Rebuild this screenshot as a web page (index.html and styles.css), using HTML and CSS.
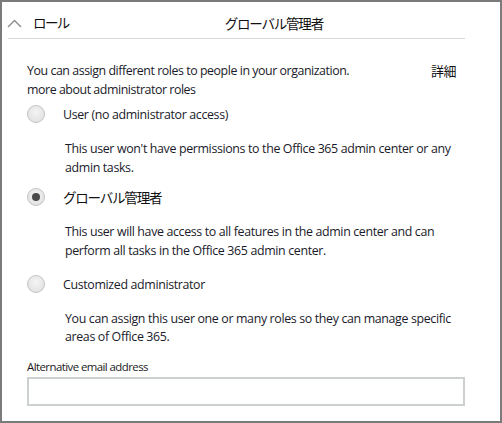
FILE: index.html
```html
<!DOCTYPE html>
<html lang="ja">
<head>
<meta charset="utf-8">
<link rel="stylesheet" href="styles.css">
</head>
<body>
<div class="frame">
  <div class="header">
    <svg class="chevron" width="15" height="9" viewBox="0 0 15 9"><path d="M1 8 L7.5 1.5 L14 8" fill="none" stroke="#8a8a8a" stroke-width="1.4"/></svg>
    <span class="header-label">ロール</span>
    <span class="header-value">グローバル管理者</span>
  </div>
  <div class="separator"></div>
  <div class="content">
    <div class="intro">
      <p class="intro-text">You can assign different roles to people in your organization.<br>more about administrator roles</p>
      <span class="more">詳細</span>
    </div>
    <div class="option first">
      <div class="option-row"><span class="radio"></span><span class="option-label">User (no administrator access)</span></div>
      <p class="option-desc">This user won't have permissions to the Office 365 admin center or any admin tasks.</p>
    </div>
    <div class="option">
      <div class="option-row"><span class="radio checked"></span><span class="option-label jp">グローバル管理者</span></div>
      <p class="option-desc">This user will have access to all features in the admin center and can perform all tasks in the Office 365 admin center.</p>
    </div>
    <div class="option last">
      <div class="option-row"><span class="radio"></span><span class="option-label">Customized administrator</span></div>
      <p class="option-desc tight">You can assign this user one or many roles so they can manage specific areas of Office 365.</p>
    </div>
    <label class="field-label">Alternative email address</label>
    <div class="field"></div>
  </div>
</div>
</body>
</html>
```
FILE: styles.css
```css
html, body {
  margin: 0;
  padding: 0;
  background: #fff;
}
body {
  font-family: "Open Sans", "Noto Sans", "Noto Sans CJK JP", sans-serif;
  color: #1e1e1e;
}
.frame {
  width: 502px;
  height: 423px;
  box-sizing: border-box;
  border: 2px solid #7b7b7b;
  overflow: hidden;
}
.header {
  display: flex;
  align-items: center;
  height: 36px;
  padding-left: 5px;
}
.chevron {
  display: block;
  margin-top: 6px;
}
.header-label {
  margin-left: 11px;
  font-family: "Noto Sans CJK JP", sans-serif;
  font-size: 13.5px;
  letter-spacing: -1.6px;
  color: #111;
  margin-top: 3px;
}
.header-value {
  margin-left: 156px;
  font-family: "Noto Sans CJK JP", sans-serif;
  font-size: 13.5px;
  letter-spacing: -1.2px;
  color: #111;
  margin-top: 5px;
}
.separator {
  margin-left: 6px;
  width: 457px;
  height: 1px;
  background: #dadada;
}
.content {
  padding: 0 35px 0 25px;
}
.intro {
  display: flex;
  justify-content: space-between;
  align-items: flex-start;
  margin-top: 22px;
}
.intro-text {
  margin: 0;
  font-size: 12.4px;
  line-height: 19px;
  letter-spacing: -0.45px;
  color: #1a1a2a;
}
.more {
  font-family: "Noto Sans CJK JP", sans-serif;
  font-size: 13px;
  line-height: 19px;
  margin-right: 9px;
  letter-spacing: -0.5px;
  color: #111;
}
.option {
  margin-top: 10px;
}
.option.first {
  margin-top: 5px;
}
.option.last {
  margin-top: 14px;
}
.option-row {
  display: flex;
  align-items: center;
  height: 20px;
}
.radio {
  width: 18px;
  height: 18px;
  box-sizing: border-box;
  border-radius: 50%;
  border: 1px solid #c4c4c4;
  background: radial-gradient(circle at 50% 40%, #f4f4f4 0%, #e4e4e4 70%, #d8d8d8 100%);
  position: relative;
  flex: none;
}
.radio.checked::after {
  content: "";
  position: absolute;
  left: 4px;
  top: 4px;
  width: 8px;
  height: 8px;
  border-radius: 50%;
  background: #4a4a4a;
}
.option-label {
  margin-left: 18px;
  font-size: 12.4px;
  letter-spacing: -0.35px;
  color: #1a1a2a;
}
.option-label.jp {
  font-family: "Noto Sans CJK JP", sans-serif;
  font-size: 13.5px;
  letter-spacing: -1.2px;
  color: #111;
}
.option-desc {
  margin: 15px 0 0 38px;
  font-size: 12.4px;
  line-height: 19px;
  letter-spacing: -0.35px;
  color: #1a1a2a;
}
.option-desc.tight {
  line-height: 18px;
  margin-top: 16px;
}
.field-label {
  display: block;
  margin-top: 13px;
  font-size: 11.4px;
  letter-spacing: -0.55px;
  color: #1a1a1a;
  line-height: 16px;
}
.field {
  margin-top: 2px;
  height: 29px;
  width: 438px;
  box-sizing: border-box;
  border: 2px solid #cdd0d0;
  background: #fff;
}
```
